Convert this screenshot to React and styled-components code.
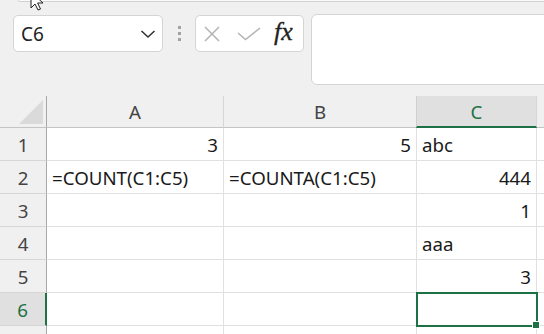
import styled, { createGlobalStyle } from 'styled-components';

/* ================= Global ================= */
const GlobalStyle = createGlobalStyle`
  html, body { margin: 0; padding: 0; }
  body {
    background: #f0f0f0;
    font-family: "Noto Sans", "Open Sans", sans-serif;
    overflow: hidden;
  }
`;

const Page = styled.div`
  width: 544px;
  height: 334px;
  position: relative;
  overflow: hidden;
  background: #f0f0f0;
`;

/* ================= Top strip (edge of the ribbon box + cursor) ================ */
const TopStrip = styled.div`
  height: 14px;
  position: relative;
`;

const RibbonEdge = styled.div`
  margin-left: 18px;
  height: 1px;
  border-bottom: 1px solid #d2d2d2;
  border-bottom-left-radius: 6px;
  border-left: 1px solid #d2d2d2;
  background: #fafafa;
`;

const Cursor = styled.svg`
  position: absolute;
  left: 28px;
  top: -9px;
`;

/* ================= Formula row ================= */
const FormulaRow = styled.div`
  display: flex;
  align-items: flex-start;
  padding-left: 13px;
  height: 82px;
`;

const NameBox = styled.div`
  width: 150px;
  height: 37px;
  margin-top: 1px;
  box-sizing: border-box;
  background: #fff;
  border: 1px solid #d4d4d4;
  border-radius: 5px;
  display: flex;
  align-items: center;
  justify-content: space-between;
  padding: 0 6px 0 7px;
  font-size: 19px;
  color: #222;
`;

const Dots = styled.div`
  width: 32px;
  height: 37px;
  margin-top: 1px;
  display: flex;
  flex-direction: column;
  align-items: center;
  justify-content: center;
  gap: 3px;
  span {
    width: 3px;
    height: 3px;
    background: #a2a2a2;
  }
`;

const ActionBox = styled.div`
  width: 109px;
  height: 37px;
  margin-top: 1px;
  box-sizing: border-box;
  background: #fff;
  border: 1px solid #d4d4d4;
  border-radius: 5px;
  display: flex;
  align-items: center;
  padding-left: 8px;
  svg + svg { margin-left: 17px; }
`;

const Fx = styled.span`
  font-family: "Liberation Serif", "DejaVu Serif", serif;
  font-style: italic;
  font-size: 26px;
  line-height: 1;
  color: #222;
  margin-left: 13px;
  margin-top: -3px;
  -webkit-text-stroke: 0.3px #222;
`;

const FormulaBar = styled.div`
  flex: 1;
  margin-left: 7px;
  margin-right: -10px;
  height: 71px;
  box-sizing: border-box;
  background: #fff;
  border: 1px solid #d4d4d4;
  border-radius: 6px;
`;

/* ================= Sheet grid ================= */
const Sheet = styled.div`
  display: grid;
  grid-template-columns: 47px 177px 193px 120px 1fr;
  grid-template-rows: 32px repeat(7, 33px);
  height: 238px;
  font-size: 18.7px;
`;

const Corner = styled.div`
  position: relative;
  background: #f0f0f0;
  border-right: 1px solid #a8a8a8;
  border-bottom: 1px solid #c4c4c4;
  &::after {
    content: '';
    position: absolute;
    right: 3px;
    bottom: 3px;
    width: 0;
    height: 0;
    border-left: 24px solid transparent;
    border-bottom: 24px solid #dadada;
  }
`;

const ColHeader = styled.div`
  display: flex;
  align-items: center;
  justify-content: center;
  color: ${({ active }) => (active ? '#1e7145' : '#444')};
  background: ${({ active }) => (active ? '#e0e0e0' : '#f0f0f0')};
  border-right: 1px solid #d6d6d6;
  border-bottom: ${({ active }) => (active ? '2px solid #1e7145' : '1px solid #c4c4c4')};
  ${({ active }) => active && 'border-left: 1px solid #cfcfcf; margin-left: -1px;'}
`;

const RowHeader = styled.div`
  display: flex;
  align-items: center;
  justify-content: center;
  color: ${({ active }) => (active ? '#1e7145' : '#444')};
  background: ${({ active }) => (active ? '#e0e0e0' : '#f0f0f0')};
  border-bottom: 1px solid #d6d6d6;
  border-right: ${({ active }) => (active ? '2px solid #1e7145' : '1px solid #a8a8a8')};
`;

const Cell = styled.div`
  position: relative;
  display: flex;
  align-items: center;
  justify-content: ${({ align }) => (align === 'right' ? 'flex-end' : 'flex-start')};
  padding: 0 5px 0 5px;
  background: #fff;
  border-right: 1px solid #e0e0e0;
  border-bottom: 1px solid #e0e0e0;
  color: #1a1a1a;
  white-space: nowrap;
  overflow: ${({ selected }) => (selected ? 'visible' : 'hidden')};
  ${({ selected }) =>
    selected &&
    `outline: 2px solid #1e7145; outline-offset: -1px; z-index: 2;`}
`;

const FillHandle = styled.span`
  position: absolute;
  right: -4px;
  bottom: -4px;
  width: 6px;
  height: 6px;
  background: #1e7145;
  border: 1px solid #fff;
`;

const rows = [
  [
    { v: '3', align: 'right' },
    { v: '5', align: 'right' },
    { v: 'abc' },
  ],
  [
    { v: '=COUNT(C1:C5)' },
    { v: '=COUNTA(C1:C5)' },
    { v: '444', align: 'right' },
  ],
  [{}, {}, { v: '1', align: 'right' }],
  [{}, {}, { v: 'aaa' }],
  [{}, {}, { v: '3', align: 'right' }],
  [{}, {}, { selected: true }],
  [{}, {}, {}],
];

const CloseIcon = () => (
  <svg width="16" height="16" viewBox="0 0 16 16">
    <path d="M1 1 L15 15 M15 1 L1 15" stroke="#b4b4b4" strokeWidth="1.5" fill="none" />
  </svg>
);

const CheckIcon = () => (
  <svg width="24" height="14" viewBox="0 0 24 14">
    <path d="M1 6 L8.5 12.5 L23 1" stroke="#b4b4b4" strokeWidth="1.5" fill="none" />
  </svg>
);

const Chevron = () => (
  <svg width="16" height="10" viewBox="0 0 16 10">
    <path d="M1.5 2 L8 8 L14.5 2" stroke="#333" strokeWidth="1.6" fill="none" />
  </svg>
);

const Row = ({ index, row }) => (
  <>
    {/* row 7 is only a sliver at the bottom edge: its number is out of view */}
    <RowHeader active={index === 5}>{index < 6 ? index + 1 : ''}</RowHeader>
    {row.map((c, i) => (
      <Cell key={i} align={c.align} selected={c.selected}>
        {c.v}
        {c.selected && <FillHandle />}
      </Cell>
    ))}
    <Cell />
  </>
);

export default function App() {
  return (
    <Page>
      <GlobalStyle />
      <TopStrip>
        <RibbonEdge />
        <Cursor width="22" height="22" viewBox="0 0 22 22">
          <path
            d="M3 1 L3 17 L7 13 L10 19 L12.5 18 L9.6 12 L15 12 Z"
            fill="#fff"
            stroke="#222"
            strokeWidth="1"
          />
        </Cursor>
      </TopStrip>

      <FormulaRow>
        <NameBox>
          <span>C6</span>
          <Chevron />
        </NameBox>
        <Dots>
          <span />
          <span />
          <span />
        </Dots>
        <ActionBox>
          <CloseIcon />
          <CheckIcon />
          <Fx>fx</Fx>
        </ActionBox>
        <FormulaBar />
      </FormulaRow>

      <Sheet>
        <Corner />
        <ColHeader>A</ColHeader>
        <ColHeader>B</ColHeader>
        <ColHeader active>C</ColHeader>
        <ColHeader />
        {rows.map((row, r) => (
          <Row key={r} index={r} row={row} />
        ))}
      </Sheet>
    </Page>
  );
}
